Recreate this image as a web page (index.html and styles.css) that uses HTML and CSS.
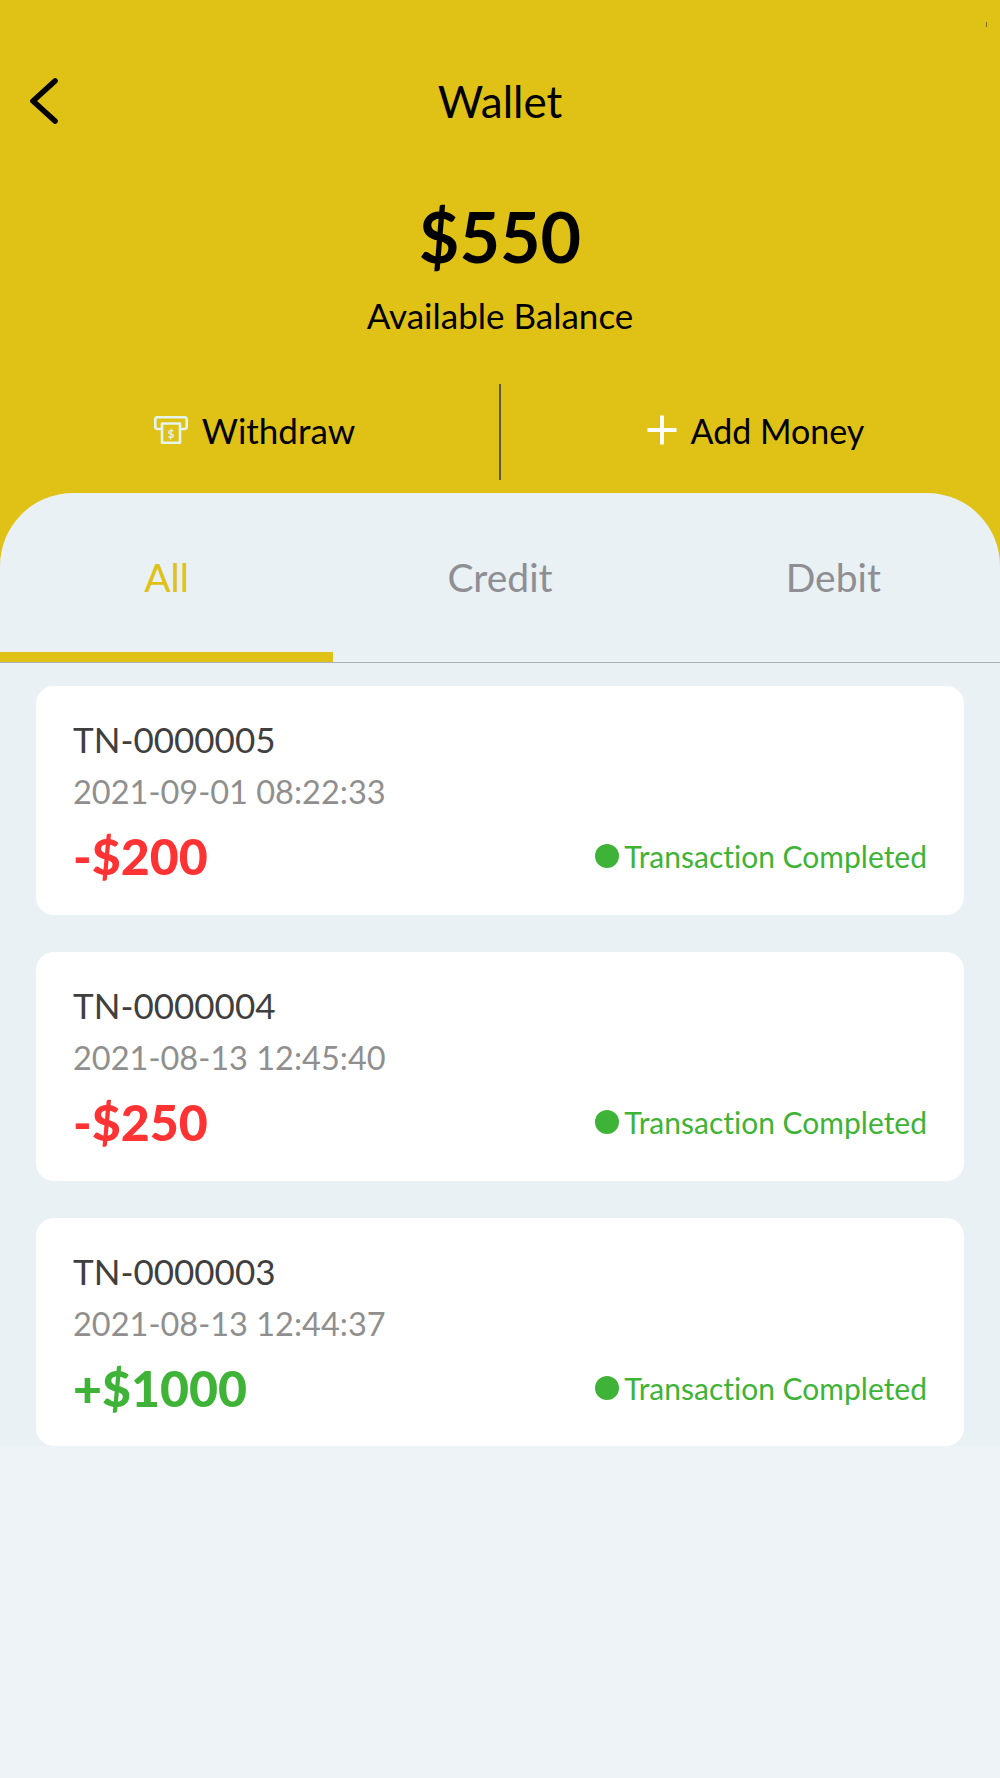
FILE: index.html
```html
<!DOCTYPE html>
<html lang="en">
<head>
    <meta charset="UTF-8">
    <meta name="viewport" content="width=device-width, initial-scale=1.0">
    <title>Wallet</title>
    <link rel="stylesheet" href="styles.css">
</head>
<body>
    <span class="status-mark"></span>

    <header class="wallet-header">
        <div class="top-bar">
            <a class="back-link" href="#" aria-label="Back">
                <svg width="28" height="46" viewBox="0 0 28 46" fill="none" stroke="#000" stroke-width="5.6" stroke-linecap="round" stroke-linejoin="round">
                    <path d="M25 3 L3 23 L25 43"/>
                </svg>
            </a>
            <h1 class="page-title">Wallet</h1>
        </div>

        <div class="balance">$550</div>
        <div class="balance-label">Available Balance</div>

        <div class="actions">
            <a class="action" href="#">
                <svg width="34" height="28" viewBox="0 0 34 28" fill="none" stroke="#e4f4ee" stroke-width="2.6" stroke-linejoin="round">
                    <path d="M8 13 H3.5 Q1.3 13 1.3 10.5 V3.5 Q1.3 1.3 3.5 1.3 H30.5 Q32.7 1.3 32.7 3.5 V10.5 Q32.7 13 30.5 13 H26"/>
                    <path d="M8 7.5 H26 V26.7 H8 Z"/>
                    <text x="17" y="21.5" text-anchor="middle" class="icon-dollar">$</text>
                </svg>
                <span>Withdraw</span>
            </a>
            <a class="action action-add" href="#">
                <svg width="30" height="30" viewBox="0 0 30 30" stroke="#fff" stroke-width="4">
                    <path d="M15 0.5 V29.5 M0.5 15 H29.5"/>
                </svg>
                <span>Add Money</span>
            </a>
        </div>
    </header>

    <main class="panel">
        <nav class="tabs">
            <a class="tab active" href="#">All</a>
            <a class="tab" href="#">Credit</a>
            <a class="tab" href="#">Debit</a>
        </nav>

        <section class="transactions">
            <article class="card">
                <div class="txn-id">TN-0000005</div>
                <div class="txn-date">2021-09-01 08:22:33</div>
                <div class="txn-row">
                    <span class="amount debit">-$200</span>
                    <span class="status"><i class="dot"></i>Transaction Completed</span>
                </div>
            </article>
            <article class="card">
                <div class="txn-id">TN-0000004</div>
                <div class="txn-date">2021-08-13 12:45:40</div>
                <div class="txn-row">
                    <span class="amount debit">-$250</span>
                    <span class="status"><i class="dot"></i>Transaction Completed</span>
                </div>
            </article>
            <article class="card">
                <div class="txn-id">TN-0000003</div>
                <div class="txn-date">2021-08-13 12:44:37</div>
                <div class="txn-row">
                    <span class="amount credit">+$1000</span>
                    <span class="status"><i class="dot"></i>Transaction Completed</span>
                </div>
            </article>
        </section>
    </main>
</body>
</html>
```

FILE: styles.css
```css
body {
    margin: 0;
    min-height: 1778px;
    background-color: #eef3f7;
    font-family: 'Lato', sans-serif;
    font-variant-ligatures: none;
    color: #000;
}

a {
    color: inherit;
    text-decoration: none;
}

/* Leftover speck from the status bar */
.status-mark {
    position: absolute;
    top: 22px;
    left: 986px;
    width: 1px;
    height: 5px;
    background-color: #7a6c10;
}

.wallet-header {
    background-color: #e0c115;
    padding: 70px 0 86px;
    text-align: center;
}

.top-bar {
    position: relative;
    height: 62px;
}

.back-link {
    position: absolute;
    left: 30px;
    top: 8px;
}

.page-title {
    margin: 0;
    font-size: 44px;
    font-weight: 400;
    line-height: 62px;
}

.balance {
    margin-top: 64px;
    font-size: 70px;
    font-weight: 700;
    line-height: 80px;
}

.balance-label {
    margin-top: 19px;
    font-size: 35px;
    line-height: 40px;
}

.actions {
    display: grid;
    grid-template-columns: 501px 1fr;
    height: 96px;
    margin-top: 49px;
}

.action {
    display: flex;
    align-items: center;
    justify-content: center;
    gap: 14px;
    height: 96px;
    box-sizing: border-box;
    padding: 0 0 4px 10px;
    font-size: 35px;
}

.action:first-child {
    border-right: 2px solid #5c5a3a;
}

.action-add {
    font-size: 34px;
}

.icon-dollar {
    font-family: 'Lato', sans-serif;
    font-size: 12px;
    font-weight: 700;
    fill: #e4f4ee;
    stroke: none;
}

/* Rounded sheet that overlaps the yellow header */
.panel {
    margin-top: -73px;
    background-color: #e9f1f5;
    border-radius: 73px 73px 0 0;
}

.tabs {
    display: grid;
    grid-template-columns: repeat(3, 1fr);
    height: 169px;
    border-bottom: 1px solid #aab2b8;
}

.tab {
    padding-top: 65px;
    font-size: 39px;
    line-height: 38px;
    color: #8e8e93;
    text-align: center;
}

.tab.active {
    color: #e0c115;
    border-bottom: 10px solid #e0c115;
}

.transactions {
    display: flex;
    flex-direction: column;
    gap: 37px;
    padding: 23px 36px 0;
}

.card {
    height: 229px;
    box-sizing: border-box;
    padding: 29px 37px 0;
    background-color: #fff;
    border-radius: 18px;
}

.card:last-child {
    height: 228px;
}

.txn-id {
    font-size: 35px;
    line-height: 48px;
    color: #3f3f3f;
}

.txn-date {
    margin-top: 7px;
    font-size: 32.5px;
    line-height: 44px;
    color: #8f8f8f;
}

.txn-row {
    display: flex;
    align-items: center;
    justify-content: space-between;
    height: 66px;
    margin-top: 9px;
}

.amount {
    font-size: 50px;
    font-weight: 900;
}

.amount.debit {
    color: #ff3333;
}

.amount.credit {
    color: #3fb337;
}

.status {
    display: flex;
    align-items: center;
    gap: 5px;
    font-size: 30px;
    color: #3fb337;
}

.dot {
    width: 24px;
    height: 24px;
    border-radius: 50%;
    background-color: #3fb337;
}
```
